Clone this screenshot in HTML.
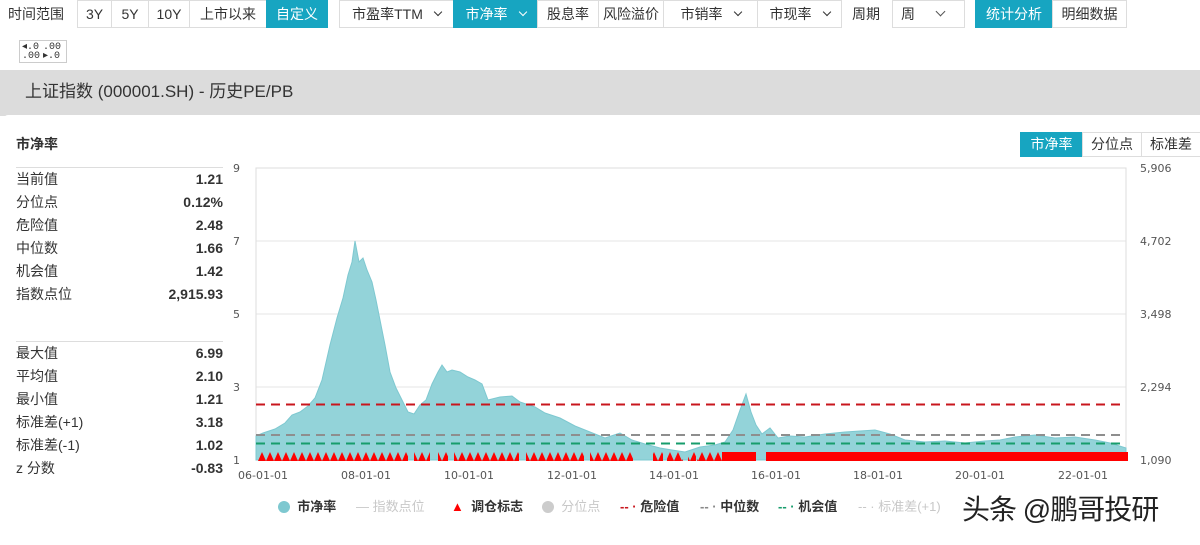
<!DOCTYPE html>
<html><head><meta charset="utf-8"><style>
*{margin:0;padding:0;box-sizing:border-box}
body{width:1200px;height:539px;overflow:hidden;background:#fff;font-family:"Liberation Sans","Noto Sans CJK SC",sans-serif;color:#333;position:relative}
.a{position:absolute}
.b{position:absolute;top:0;height:28px;border:1px solid #ddd;font-size:14px;line-height:26px;text-align:center;background:#fff;color:#333}
.t{background:#17a5c1;color:#fff;border-color:#17a5c1}
.c::after{content:"";display:inline-block;width:5px;height:5px;border-right:1px solid currentColor;border-bottom:1px solid currentColor;transform:rotate(45deg);margin-left:12px;vertical-align:4px}
.st{position:absolute;left:16px;width:207px;font-size:14px}
.st div{height:23px;line-height:23px;display:flex;justify-content:space-between}
.st b{font-weight:bold}
.lg{position:absolute;top:499px;font-size:13px;line-height:16px;font-weight:bold;color:#333}
.g{color:#c8c8c8;font-weight:normal}
</style></head><body>
<div class="a" style="left:8px;top:0;font-size:14px;line-height:28px">时间范围</div>
<div class="b" style="left:77px;width:35px">3Y</div>
<div class="b" style="left:111px;width:38px">5Y</div>
<div class="b" style="left:148px;width:42px">10Y</div>
<div class="b" style="left:189px;width:78px">上市以来</div>
<div class="b t" style="left:266px;width:62px">自定义</div>
<div class="b c" style="left:339px;width:115px">市盈率TTM</div>
<div class="b t c" style="left:453px;width:85px">市净率</div>
<div class="b" style="left:537px;width:62px">股息率</div>
<div class="b" style="left:598px;width:66px">风险溢价</div>
<div class="b c" style="left:663px;width:95px">市销率</div>
<div class="b c" style="left:757px;width:85px">市现率</div>
<div class="a" style="left:852px;top:0;font-size:14px;line-height:28px">周期</div>
<div class="b" style="left:892px;width:73px;text-align:left;padding-left:8px">周</div>
<div class="a" style="left:937px;top:8px;width:7px;height:7px;border-right:1px solid #555;border-bottom:1px solid #555;transform:rotate(45deg)"></div>
<div class="b t" style="left:975px;width:78px">统计分析</div>
<div class="b" style="left:1052px;width:75px">明细数据</div>
<div class="a" style="left:19px;top:40px;width:48px;height:23px;border:1px solid #ccc;font-size:10px;line-height:9px;font-family:'Liberation Mono',monospace;padding:2px 2px;display:flex;gap:3px"><span>◂.0<br>.00</span><span>.00<br>▸.0</span></div>
<div class="a" style="left:0;top:70px;width:1200px;height:46px;background:#dcdcdc"></div>
<div class="a" style="left:25px;top:70px;font-size:17px;line-height:44px;color:#333">上证指数 (000001.SH) - 历史PE/PB</div>
<div class="a" style="left:4px;top:115px;width:1200px;height:430px;background:#fff;border-radius:4px"></div>
<div class="a" style="left:16px;top:134px;font-size:14px;font-weight:bold">市净率</div>
<div class="b t" style="left:1020px;top:132px;height:25px;line-height:23px;width:63px">市净率</div>
<div class="b" style="left:1082px;top:132px;height:25px;line-height:23px;width:60px">分位点</div>
<div class="b" style="left:1141px;top:132px;height:25px;line-height:23px;width:60px">标准差</div>
<div class="a" style="left:16px;top:167px;width:207px;border-top:1px solid #ddd"></div>
<div class="st" style="top:168px"><div>当前值<b>1.21</b></div><div>分位点<b>0.12%</b></div><div>危险值<b>2.48</b></div><div>中位数<b>1.66</b></div><div>机会值<b>1.42</b></div><div>指数点位<b>2,915.93</b></div></div>
<div class="a" style="left:16px;top:341px;width:207px;border-top:1px solid #ddd"></div>
<div class="st" style="top:342px"><div>最大值<b>6.99</b></div><div>平均值<b>2.10</b></div><div>最小值<b>1.21</b></div><div>标准差(+1)<b>3.18</b></div><div>标准差(-1)<b>1.02</b></div><div>z 分数<b>-0.83</b></div></div>
<svg class="a" style="left:0;top:0" width="1200" height="539">
<defs><pattern id="tr" x="258" y="452" width="8" height="9" patternUnits="userSpaceOnUse"><polygon points="0,9 4,0 8,9" fill="#f00"/></pattern></defs>
<g stroke="#e6e6e6"><line x1="256" y1="241" x2="1126" y2="241"/><line x1="256" y1="314" x2="1126" y2="314"/><line x1="256" y1="387" x2="1126" y2="387"/></g>
<rect x="256" y="168" width="870" height="292" fill="none" stroke="#ddd"/>
<g font-size="11" fill="#555" font-family="DejaVu Sans,sans-serif"><text x="233" y="172">9</text><text x="233" y="245">7</text><text x="233" y="318">5</text><text x="233" y="391">3</text><text x="233" y="464">1</text>
<text x="1140" y="172">5,906</text><text x="1140" y="245">4,702</text><text x="1140" y="318">3,498</text><text x="1140" y="391">2,294</text><text x="1140" y="464">1,090</text>
<g text-anchor="middle"><text x="263" y="479">06-01-01</text><text x="366" y="479">08-01-01</text><text x="469" y="479">10-01-01</text><text x="572" y="479">12-01-01</text><text x="674" y="479">14-01-01</text><text x="776" y="479">16-01-01</text><text x="878" y="479">18-01-01</text><text x="980" y="479">20-01-01</text><text x="1083" y="479">22-01-01</text></g></g>
<path d="M256,460 L256,436 263,433 275,429 285,423 292,415 300,412 308,406 315,398 322,380 330,345 337,318 343,298 348,275 352,262 355,241 359,262 363,258 367,270 372,282 376,300 380,320 385,345 390,372 396,388 402,400 408,412 414,414 420,405 426,400 432,384 438,372 442,365 447,372 452,370 460,372 468,377 475,380 482,384 488,400 500,397 512,396 520,402 535,407 545,413 560,418 575,426 590,432 605,438 620,433 632,440 645,444 660,448 672,450 685,452 700,447 715,445 725,442 733,430 740,410 746,394 751,412 756,425 762,434 770,428 778,438 790,436 805,437 825,434 845,432 860,431 875,430 890,434 905,440 925,442 945,441 965,443 985,441 1000,440 1015,437 1035,435 1055,438 1075,437 1095,440 1110,443 1126,448 L1126,460 Z" fill="#93d3d9" stroke="#7ec8d0" stroke-width="1"/>
<g fill="url(#tr)"><rect x="258" y="452" width="150" height="9"/><rect x="414" y="452" width="16" height="9"/><rect x="438" y="452" width="10" height="9"/><rect x="454" y="452" width="65" height="9"/><rect x="526" y="452" width="58" height="9"/><rect x="590" y="452" width="43" height="9"/><rect x="653" y="452" width="10" height="9"/><rect x="667" y="452" width="16" height="9"/><rect x="688" y="452" width="8" height="9"/><rect x="697" y="452" width="25" height="9"/></g>
<rect x="722" y="452" width="34" height="9" fill="#f00"/><rect x="766" y="452" width="362" height="9" fill="#f00"/>
<g stroke-width="2" stroke-dasharray="9,6" fill="none"><line x1="256" y1="404.5" x2="1126" y2="404.5" stroke="#c8161d"/><line x1="256" y1="435" x2="1126" y2="435" stroke="#8e8e8e"/><line x1="256" y1="443.5" x2="1126" y2="443.5" stroke="#179d6c"/></g>
</svg>
<div class="lg" style="left:278px"><span style="display:inline-block;width:12px;height:12px;border-radius:50%;background:#7ec8d0;vertical-align:-2px"></span>&nbsp; 市净率</div>
<div class="lg g" style="left:356px">— 指数点位</div>
<div class="lg" style="left:451px"><span style="color:#f00">▲</span>&nbsp; 调仓标志</div>
<div class="lg g" style="left:542px"><span style="display:inline-block;width:12px;height:12px;border-radius:50%;background:#ccc;vertical-align:-2px"></span>&nbsp; 分位点</div>
<div class="lg" style="left:620px"><span style="color:#c8161d">-- ·</span> 危险值</div>
<div class="lg" style="left:700px"><span style="color:#888">-- ·</span> 中位数</div>
<div class="lg" style="left:778px"><span style="color:#179d6c">-- ·</span> 机会值</div>
<div class="lg g" style="left:858px">-- · 标准差(+1)</div>
<div class="a" style="left:962px;top:488px;font-size:28px;color:#222;text-shadow:1px 1px 1px #fff;letter-spacing:-1px">头条 @鹏哥投研</div>
</body></html>
